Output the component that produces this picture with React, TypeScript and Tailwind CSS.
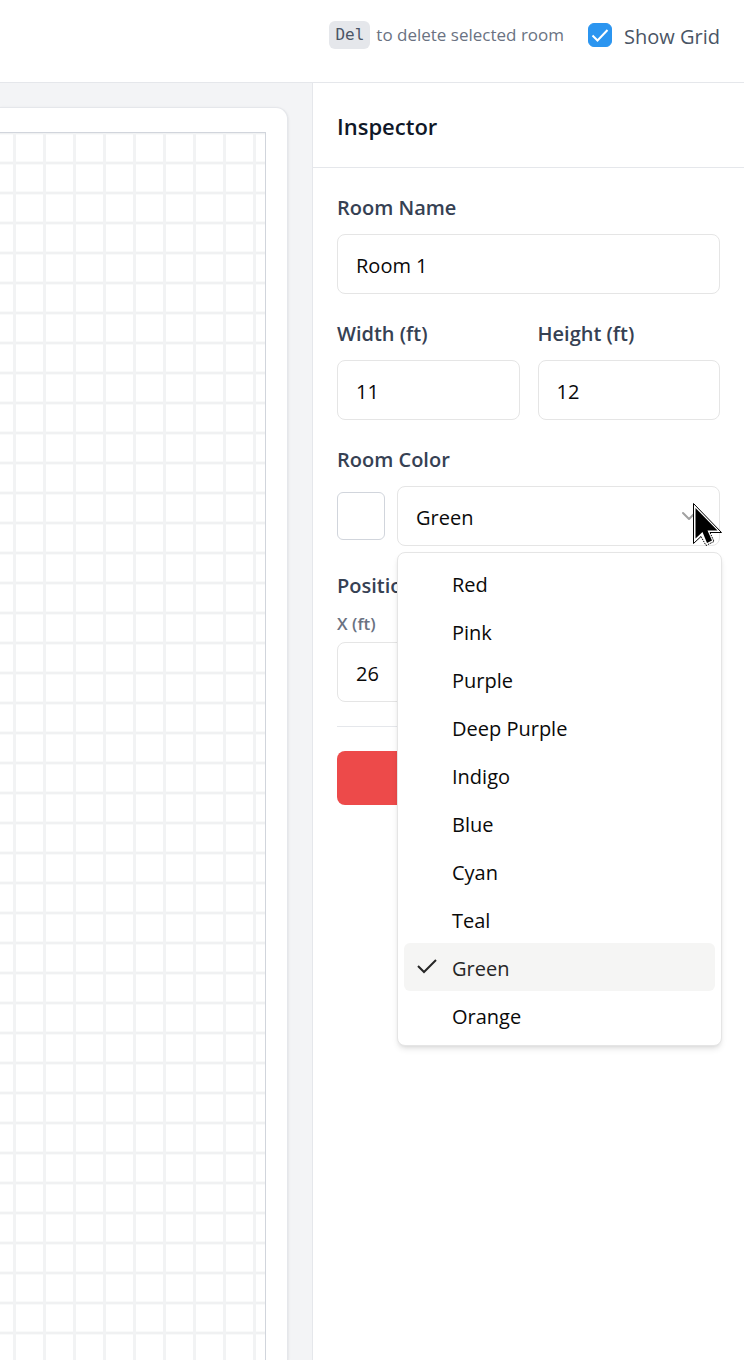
import { useState } from "react";
import { Check, ChevronDown, Trash2 } from "lucide-react";

const COLORS = ["Red", "Pink", "Purple", "Deep Purple", "Indigo", "Blue", "Cyan", "Teal", "Green", "Orange"];

type FieldProps = { id: string; label: string; value: string; onChange: (v: string) => void; small?: boolean };

function Field({ id, label, value, onChange, small = false }: FieldProps) {
  return (
    <div className="flex min-w-0 flex-col">
      <label
        htmlFor={id}
        className={small ? "text-[17px] leading-6 font-semibold text-gray-500" : "text-xl leading-6 font-semibold text-gray-700"}
      >
        {label}
      </label>
      <input
        id={id}
        value={value}
        onChange={(e) => onChange(e.target.value)}
        className={`h-15 w-full rounded-lg border border-neutral-200 bg-white px-[18px] pt-0.5 text-xl text-neutral-950 outline-none ${small ? "mt-1.5" : "mt-3.5"}`}
      />
    </div>
  );
}

function Pointer() {
  return (
    <svg className="pointer-events-none absolute top-4 -right-0.5 z-20" width="30" height="46" viewBox="0 0 30 46" aria-hidden="true">
      <path d="M1.5 1.5V41.5L9 34.5L14 43.5L22 39.5L18 30.5H29.5Z" fill="#fff" />
      <path d="M9 34.5L14 43.5L22 39.5L18 30.5" fill="none" stroke="#000" strokeDasharray="1.5 1" />
      <path d="M9 34.5L1.5 41.5V1.5L29.5 30.5H18" fill="none" stroke="#000" />
      <path d="M3.5 6V36.5L10.5 30L15 41L20 38.5L15.5 28.5H25.5Z" fill="#000" />
    </svg>
  );
}

export default function App() {
  const [showGrid, setShowGrid] = useState(true);
  const [name, setName] = useState("Room 1");
  const [width, setWidth] = useState("11");
  const [height, setHeight] = useState("12");
  const [x, setX] = useState("26");
  const [y, setY] = useState("10");
  const [open, setOpen] = useState(true);
  const [color, setColor] = useState("Green");

  return (
    <div className="flex min-h-screen flex-col bg-white font-['Open_Sans','Noto_Sans',sans-serif]">
      <header className="flex h-[83px] items-start justify-end gap-6 border-b border-gray-200 px-6 pt-[21px]">
        <p className="flex items-center gap-1.5 text-[17px] leading-7 text-gray-500">
          <kbd className="rounded-md bg-gray-200 px-1.5 font-['DejaVu_Sans_Mono',monospace] text-base leading-7 text-gray-600">Del</kbd>
          to delete selected room
        </p>
        <label className="flex items-start gap-3 text-xl leading-8 text-gray-600">
          <span className="relative mt-0.5 flex size-6">
            <input
              type="checkbox"
              checked={showGrid}
              onChange={(e) => setShowGrid(e.target.checked)}
              className="size-6 appearance-none rounded-md border border-gray-300 checked:border-[#2b95f0] checked:bg-[#2b95f0]"
            />
            {showGrid && (
              <svg className="pointer-events-none absolute inset-0 size-6" viewBox="0 0 24 24" fill="none" aria-hidden="true">
                <path d="M4.5 12.5L9.5 17.5L19.5 7" stroke="#fff" strokeWidth="2" />
              </svg>
            )}
          </span>
          Show Grid
        </label>
      </header>

      <div className="flex flex-1">
        <main className="flex min-w-0 flex-1 bg-gray-100 pt-6 pr-6">
          <div className="flex flex-1 rounded-tr-xl border-t border-r border-gray-200 bg-white pt-6 pr-[21px] shadow-sm">
            <div
              className={`flex-1 border-t border-r border-gray-300 ${
                showGrid
                  ? "bg-[linear-gradient(to_right,#f2f3f4_3px,transparent_3px),linear-gradient(to_bottom,#f9fafa_1px,#f0f1f2_1px,#f0f1f2_3px,#f9fafa_3px,#f9fafa_4px,transparent_4px)] bg-size-[30px_30px] bg-position-[13px_28px]"
                  : ""
              }`}
            />
          </div>
        </main>

        <aside className="w-[432px] shrink-0 border-l border-gray-200 bg-white">
          <div className="flex h-[85px] items-center border-b border-gray-200 px-6 pt-0.5">
            <h2 className="text-[22px] leading-8 font-semibold text-gray-900">Inspector</h2>
          </div>
          <form className="flex flex-col gap-7 p-6 pt-7" onSubmit={(e) => e.preventDefault()}>
            <Field id="room-name" label="Room Name" value={name} onChange={setName} />
            <div className="grid grid-cols-2 gap-[18px]">
              <Field id="room-width" label="Width (ft)" value={width} onChange={setWidth} />
              <Field id="room-height" label="Height (ft)" value={height} onChange={setHeight} />
            </div>

            <div className="flex flex-col gap-3.5">
              <span id="color-label" className="text-xl leading-6 font-semibold text-gray-700">Room Color</span>
              <div className="flex items-center gap-3">
                <span className="size-12 shrink-0 rounded-md border border-gray-300" />
                <div className="relative flex-1">
                  <button
                    type="button"
                    role="combobox"
                    aria-labelledby="color-label"
                    aria-expanded={open}
                    aria-controls="color-list"
                    onClick={() => setOpen(!open)}
                    className="flex h-15 w-full items-center justify-between rounded-lg border border-neutral-200 bg-white px-[18px] text-xl text-neutral-950"
                  >
                    <span className="pt-1">{color}</span>
                    <ChevronDown className="size-6 text-neutral-400" strokeWidth={2} />
                  </button>
                  <Pointer />
                  {open && (
                    <ul
                      id="color-list"
                      role="listbox"
                      aria-labelledby="color-label"
                      className="absolute top-full left-0 z-10 mt-1.5 w-[325px] rounded-lg border border-neutral-200 bg-white p-1.5 shadow-md"
                    >
                      {COLORS.map((c) => (
                        <li
                          key={c}
                          role="option"
                          aria-selected={c === color}
                          onClick={() => {
                            setColor(c);
                            setOpen(false);
                          }}
                          className={`flex h-12 cursor-default items-center gap-3 rounded-md px-3 text-xl ${
                            c === color ? "bg-[#f5f5f4] text-neutral-800" : "text-neutral-950"
                          }`}
                        >
                          <span className="size-6 shrink-0">
                            {c === color && (
                              <svg className="size-6" viewBox="0 0 24 24" fill="none" aria-hidden="true">
                                <path d="M2 11L8 17L20 5" stroke="currentColor" strokeWidth="2" />
                              </svg>
                            )}
                          </span>
                          <span className="pt-1">{c}</span>
                        </li>
                      ))}
                    </ul>
                  )}
                </div>
              </div>
            </div>

            <fieldset>
              <legend className="text-xl leading-6 font-semibold text-gray-700">Position</legend>
              <div className="grid grid-cols-2 gap-[18px] pt-3.5">
                <Field id="room-x" label="X (ft)" value={x} onChange={setX} small />
                <Field id="room-y" label="Y (ft)" value={y} onChange={setY} small />
              </div>
            </fieldset>

            <div className="-mt-1 border-t border-gray-200 pt-6">
              <button
                type="button"
                aria-label="Delete room"
                className="flex h-[54px] w-full items-center justify-center rounded-lg bg-[#ed4a4a] text-white"
              >
                <Trash2 className="size-6" />
              </button>
            </div>
          </form>
        </aside>
      </div>
    </div>
  );
}
